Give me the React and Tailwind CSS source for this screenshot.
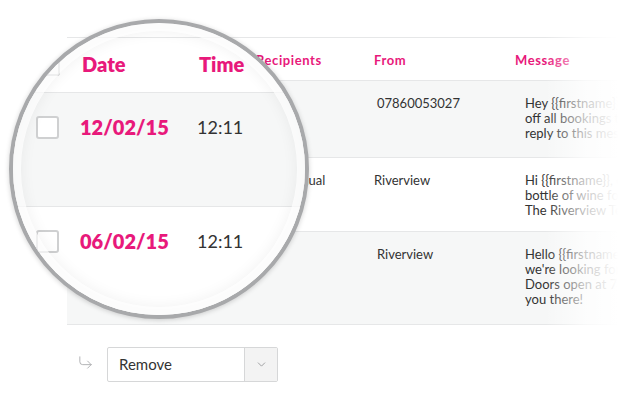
import { ChevronDown, CornerDownRight } from "lucide-react";

const rows = [
    {
        recipients: "",
        from: "07860053027",
        fromPad: "pl-[3px]",
        message: [
            "Hey {{firstname}}, we're offering 20%",
            "off all bookings this weekend. Just",
            "reply to this message to book.",
        ],
        shade: true,
        height: "h-[77px]",
    },
    {
        recipients: "Manual",
        from: "Riverview",
        fromPad: "pl-0",
        message: [
            "Hi {{firstname}}, enjoy a free",
            "bottle of wine for your table. From",
            "The Riverview Team",
        ],
        shade: false,
        height: "h-[74px]",
    },
    {
        recipients: "",
        from: "Riverview",
        fromPad: "pl-[3px]",
        message: [
            "Hello {{firstname}}, this Friday",
            "we're looking forward to quiz night.",
            "Doors open at 7pm. Hope to see",
            "you there!",
        ],
        shade: true,
        height: "h-[93px]",
    },
];

const cols = "grid grid-cols-[189px_118px_141px_103px]";

function Checkbox() {
    return <div className="w-[23px] h-[23px] shrink-0 rounded-[3px] border-2 border-[#cfd0d1] bg-white" />;
}

function Lens() {
    return (
        <div className="absolute left-[9px] top-[19px] w-[300px] h-[300px] rounded-full border-4 border-[#a8a9ab] bg-white overflow-hidden shadow-[0_1px_5px_rgba(0,0,0,0.18)]">
            <div className="absolute left-[-13px] top-[-23px] w-[330px]">
                <div className="mt-[37px] h-[56px] flex items-center pl-[37px] pb-[2px] border-y border-[#e6e7e8]">
                    <Checkbox />
                    <span className="ml-[22px] w-[117px] text-[20px] font-extrabold text-[#e8197b]">Date</span>
                    <span className="text-[20px] font-extrabold text-[#e8197b]">Time</span>
                </div>
                <div className="h-[114px] pt-[22px] bg-[#f6f7f7] border-b border-[#e6e7e8]">
                    <div className="flex items-center h-[24px] pl-[36px]">
                        <Checkbox />
                        <span className="ml-[21px] w-[117px] text-[20px] font-extrabold text-[#e8197b]">12/02/15</span>
                        <span className="text-[18px] text-[#333]">12:11</span>
                    </div>
                </div>
                <div className="h-[114px] pt-[22px] bg-white">
                    <div className="flex items-center h-[24px] pl-[36px]">
                        <Checkbox />
                        <span className="ml-[21px] w-[117px] text-[20px] font-extrabold text-[#e8197b]">06/02/15</span>
                        <span className="text-[18px] text-[#333]">12:11</span>
                    </div>
                </div>
            </div>
            <div className="absolute inset-0 rounded-full shadow-[inset_0_0_0_8px_rgba(255,255,255,0.7),inset_0_0_14px_9px_rgba(0,0,0,0.05)]" />
        </div>
    );
}

export default function App() {
    return (
        <div
            className="relative w-[618px] h-[412px] overflow-hidden bg-white text-[#333]"
            style={{ fontFamily: "Lato, 'Open Sans', sans-serif" }}
        >
            <div className="pt-[37px] pl-[67px]">
                <div className="relative w-[551px]">
                    <div className={`${cols} h-[44px] items-center pt-[3px] border-y border-[#e6e7e8] text-[13px] tracking-[0.6px] font-bold text-[#e8197b]`}>
                        <div />
                        <div>Recipients</div>
                        <div>From</div>
                        <div className="overflow-hidden whitespace-nowrap">Message</div>
                    </div>

                    {rows.map((r, i) => (
                        <div
                            key={i}
                            className={`${cols} ${r.height} pt-[15px] text-[13px] leading-[15px] ${r.shade ? "bg-[#f6f7f7]" : "bg-white"} border-b border-[#e6e7e8]`}
                        >
                            <div />
                            <div className="pl-[27px]">{r.recipients}</div>
                            <div className={r.fromPad}>{r.from}</div>
                            <div className="pl-[10px] overflow-hidden">
                                {r.message.map((line, j) => (
                                    <div key={j} className="whitespace-nowrap">{line}</div>
                                ))}
                            </div>
                        </div>
                    ))}

                    <div className="absolute top-0 bottom-0 left-[478px] w-[73px] bg-[linear-gradient(to_right,rgba(255,255,255,0),rgba(255,255,255,0.72)_55%,#fff_100%)]" />
                </div>

                <div className="mt-[22px] ml-[10px] flex items-center gap-[13px]">
                    <CornerDownRight size={17} strokeWidth={1.25} color="#a9aaac" className="-mt-[4px]" />
                    <div className="flex w-[171px] h-[35px] rounded-[2px] border border-[#d6d7d8] bg-white overflow-hidden">
                        <div className="flex-1 flex items-center pl-[11px] text-[15px] text-[#333]">Remove</div>
                        <div className="w-[33px] flex items-center justify-center border-l border-[#d6d7d8] bg-[#f3f3f3]">
                            <ChevronDown size={13} strokeWidth={1.5} color="#8e8f91" />
                        </div>
                    </div>
                </div>
            </div>

            <Lens />
        </div>
    );
}
